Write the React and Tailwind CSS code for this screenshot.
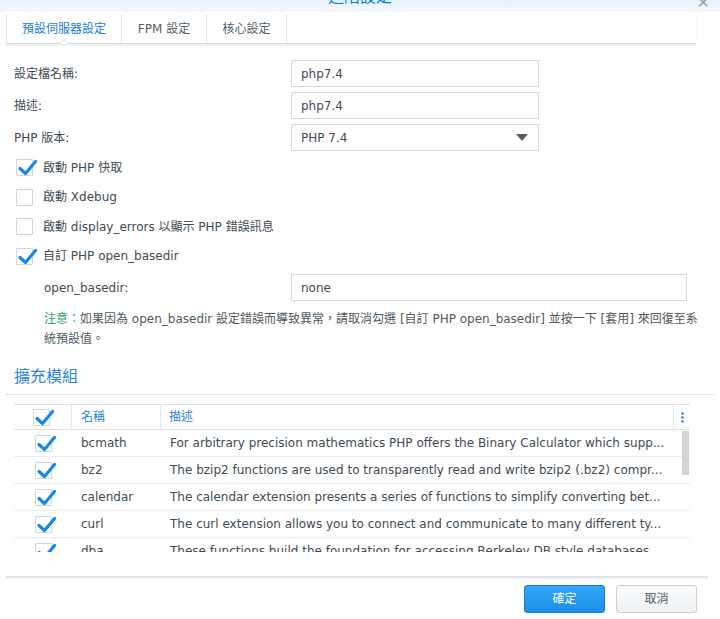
import React from 'react';

const font = "font-['DejaVu_Sans','Noto_Sans_CJK_TC',sans-serif]";

function Check({ checked }) {
    return (
        <span className="relative block w-[17px] h-[17px] border border-[#cfd6de] bg-white rounded-[1px]">
            {checked && (
                <svg className="absolute left-[1px] top-[-1px]" width="20" height="18" viewBox="0 0 20 18">
                    <path d="M2 9.5 L7.5 14.5 L17.5 2.5" fill="none" stroke="#1a87e2" strokeWidth="3.2" strokeLinecap="round" strokeLinejoin="round" />
                </svg>
            )}
        </span>
    );
}

function Field({ label, value, select }) {
    return (
        <div className="flex items-center h-[27px]">
            <span className="w-[291px] pl-[14px]">{label}</span>
            <div className="w-[248px] h-[27px] border border-[#d3dae2] flex items-center justify-between pl-[9px] pr-[10px]">
                <span>{value}</span>
                {select && (
                    <svg width="12" height="7" viewBox="0 0 12 7"><path d="M0 0 H12 L6 7 Z" fill="#555d66" /></svg>
                )}
            </div>
        </div>
    );
}

const modules = [
    ['bcmath', 'For arbitrary precision mathematics PHP offers the Binary Calculator which supp...'],
    ['bz2', 'The bzip2 functions are used to transparently read and write bzip2 (.bz2) compr...'],
    ['calendar', 'The calendar extension presents a series of functions to simplify converting bet...'],
    ['curl', 'The curl extension allows you to connect and communicate to many different ty...'],
    ['dba', 'These functions build the foundation for accessing Berkeley DB style databases...'],
];

export default function App() {
    return (
        <div className={`w-[720px] h-[619px] bg-white relative overflow-hidden text-[12px] text-[#414b55] ${font}`}>
            {/* dialog title bar, mostly scrolled off */}
            <div className="h-[12px] bg-gradient-to-b from-[#e6f0fa] to-[#f6f9fd] flex justify-center overflow-hidden relative">
                <span className="text-[#0b7fd6] text-[16px] leading-[16px] -mt-[11px]">進階設定</span>
                <span className="absolute right-[10px] -top-[9px] text-[#9aa3ad] text-[16px]">✕</span>
            </div>

            {/* tabs */}
            <div className="ml-[6px] mr-[24px] mt-[2px] h-[30px] flex items-stretch border-l border-[#e3e7ec] border-b border-b-[#d6dbe0] shadow-[0_2px_2px_rgba(0,0,0,0.06)] relative">
                <div className="w-[115px] border-r border-[#e3e7ec] flex items-center justify-center text-[#1a7fd4] relative">
                    預設伺服器設定
                    <span className="absolute left-[52px] bottom-[-1px] w-0 h-0 border-l-[5px] border-r-[5px] border-b-[5px] border-l-transparent border-r-transparent border-b-[#d6dbe0]" />
                    <span className="absolute left-[53px] bottom-[-1px] w-0 h-0 border-l-[4px] border-r-[4px] border-b-[4px] border-l-transparent border-r-transparent border-b-white" />
                </div>
                <div className="w-[85px] border-r border-[#e3e7ec] flex items-center justify-center text-[#555e67]">FPM 設定</div>
                <div className="w-[80px] border-r border-[#e3e7ec] flex items-center justify-center text-[#555e67]">核心設定</div>
            </div>

            {/* form */}
            <div className="mt-[16px] flex flex-col gap-[5px]">
                <Field label="設定檔名稱:" value="php7.4" />
                <Field label="描述:" value="php7.4" />
                <Field label="PHP 版本:" value="PHP 7.4" select />
            </div>

            <div className="mt-[2px] flex flex-col">
                {[
                    ['啟動 PHP 快取', true],
                    ['啟動 Xdebug', false],
                    ['啟動 display_errors 以顯示 PHP 錯誤訊息', false],
                    ['自訂 PHP open_basedir', true],
                ].map(([t, c]) => (
                    <div key={t} className="h-[29.5px] flex items-center pl-[16px] gap-[10px]">
                        <Check checked={c} />
                        <span>{t}</span>
                    </div>
                ))}
            </div>

            <div className="mt-[3px] flex items-center h-[27px]">
                <span className="w-[291px] pl-[44px]">open_basedir:</span>
                <div className="w-[396px] h-[27px] border border-[#d3dae2] flex items-center pl-[9px]">none</div>
            </div>

            <p className="mt-[8px] pl-[44px] pr-[10px] leading-[20px] text-[#50595f]">
                <span className="text-[#1ea36a]">注意：</span>如果因為 open_basedir 設定錯誤而導致異常，請取消勾選 [自訂 PHP open_basedir] 並按一下 [套用] 來回復至系
                <br />統預設值。
            </p>

            {/* extensions */}
            <div className="mt-[17px] mx-[6px] pl-[8px] pb-[6px] border-b border-dotted border-[#bcd2e6] text-[#2a86d2] text-[16px] leading-[22px]">擴充模組</div>

            <div className="mt-[9px] ml-[14px] w-[676px] border-t border-[#dde3e9]">
                <div className="h-[25px] flex items-stretch border-b border-[#dde3e9] text-[#2a86d2]">
                    <div className="w-[58px] border-r border-[#e3e7ec] flex items-center pl-[19px]"><Check checked /></div>
                    <div className="w-[89px] border-r border-[#e3e7ec] flex items-center pl-[9px]">名稱</div>
                    <div className="flex-1 border-r border-[#e3e7ec] flex items-center pl-[8px]">描述</div>
                    <div className="w-[16px] flex items-center justify-center">
                        <svg width="3" height="11" viewBox="0 0 3 11"><circle cx="1.5" cy="1.5" r="1.3" fill="#2a86d2" /><circle cx="1.5" cy="5.5" r="1.3" fill="#2a86d2" /><circle cx="1.5" cy="9.5" r="1.3" fill="#2a86d2" /></svg>
                    </div>
                </div>
                <div className="h-[122px] overflow-hidden relative">
                    {modules.map(([n, d]) => (
                        <div key={n} className="h-[27px] flex items-center border-b border-[#e8edf2] pr-[24px]">
                            <div className="w-[58px] pl-[21px]"><Check checked /></div>
                            <div className="w-[90px] pl-[9px]">{n}</div>
                            <div className="flex-1 pl-[8px] whitespace-nowrap overflow-hidden">{d}</div>
                        </div>
                    ))}
                    <div className="absolute right-[1px] top-[1px] w-[7px] h-[44px] bg-[#d4d4d4]" />
                </div>
            </div>

            {/* footer */}
            <div className="absolute left-[6px] right-[12px] top-[576px] h-[2px] bg-[#e2e5e8] shadow-[0_1px_1px_rgba(0,0,0,0.05)]" />
            <div className="absolute top-[585px] right-[23px] flex gap-[11px]">
                <button className="w-[81px] h-[28px] rounded-[3px] bg-gradient-to-b from-[#33a6f5] to-[#1a8fe6] border border-[#1a7dd0] text-white">確定</button>
                <button className="w-[81px] h-[28px] rounded-[3px] bg-gradient-to-b from-[#fbfcfd] to-[#eef1f4] border border-[#c9d0d7] text-[#555e67]">取消</button>
            </div>
        </div>
    );
}
